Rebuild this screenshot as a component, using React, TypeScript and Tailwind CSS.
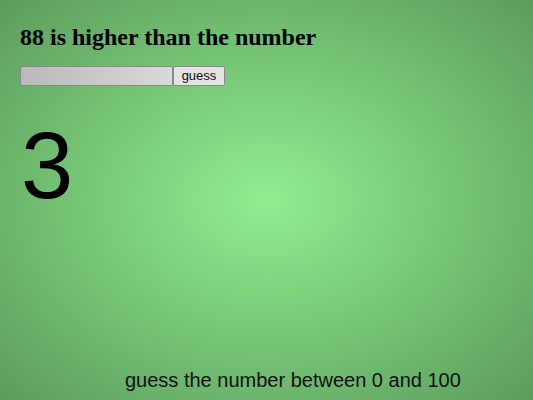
export default function App() {
  return (
    <div className="w-[533px] h-[400px] flex flex-col bg-[radial-gradient(ellipse_at_center,#90ee90_0%,#5c9c5c_100%)] text-black overflow-hidden">
      <h1 className="ml-5 mt-[23px] text-[24px] leading-[28px] font-bold font-['Liberation_Serif',serif]">
        88 is higher than the number
      </h1>
      <div className="ml-5 mt-[15px] flex h-[20px]">
        <input
          type="text"
          className="w-[153px] h-[20px] border border-[#8a8a8a] rounded-[2px] bg-[linear-gradient(90deg,#b9b9b9,#d9d9d9)] outline-none"
        />
        <button className="w-[52px] h-[20px] border border-[#8a8a8a] rounded-[2px] bg-[#e3e3e3] text-[13px] leading-[18px] font-['Liberation_Sans',sans-serif] text-[#111]">
          guess
        </button>
      </div>
      <div className="ml-[21px] mt-[24px] text-[94px] leading-[112px] font-['Liberation_Sans',sans-serif]">
        3
      </div>
      <div className="flex-1" />
      <div className="ml-[125px] mb-[8px] text-[20px] leading-[24px] font-['Liberation_Sans',sans-serif] text-[#111]">
        guess the number between 0 and 100
      </div>
    </div>
  );
}
